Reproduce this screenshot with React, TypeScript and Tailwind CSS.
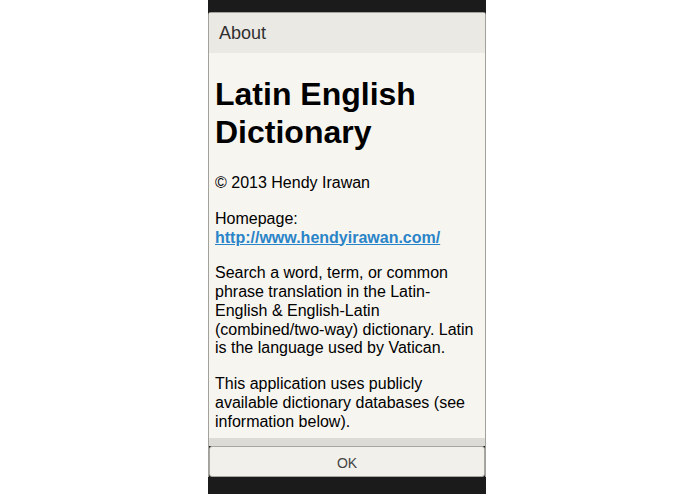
export default function App() {
  return (
    <div className="flex h-[494px] w-[695px] bg-white font-['Liberation_Sans',Arial,sans-serif]">
      <div className="ml-[208px] flex w-[278px] flex-col bg-[#1b1b1b] pt-3 pb-[17px]">
        <div className="flex min-h-0 flex-1 flex-col rounded-t-[3px] border-x border-t border-[#a3a19b]">
          {/* Title bar */}
          <div className="h-[40px] shrink-0 bg-[#ebe9e4] px-[10px] pt-[9px] text-[18px] leading-[22px] text-[#303030]">
            About
          </div>

          {/* Scrollable body */}
          <div className="min-h-0 flex-1 overflow-hidden bg-[#f7f5f0] px-[6px] pt-[2px] text-[16px] leading-[18.75px] text-black">
            <h1 className="mt-[21px] mb-[23px] text-[32px] font-bold leading-[37.5px]">Latin English Dictionary</h1>
            <p>© 2013 Hendy Irawan</p>
            <p className="mt-[17px]">
              Homepage:{' '}
              <a href="#" className="font-bold text-[#2a84c8] underline">
                http://www.hendyirawan.com/
              </a>
            </p>
            <p className="mt-[17px]">
              Search a word, term, or common phrase translation in the Latin-English &amp; English-Latin
              (combined/two-way) dictionary. Latin is the language used by Vatican.
            </p>
            <p className="mt-[17px]">
              This application uses publicly available dictionary databases (see information below).
            </p>
          </div>

          {/* Button bar */}
          <div className="h-[8px] shrink-0 bg-[#dddbd6]" />
          <div className="flex h-[31px] shrink-0 items-center justify-center rounded-[3px] border border-[#a9a7a1] bg-[#f2f0eb] pt-[2px] text-[14px] leading-[16px] text-[#444]">
            OK
          </div>
        </div>
      </div>
    </div>
  )
}
